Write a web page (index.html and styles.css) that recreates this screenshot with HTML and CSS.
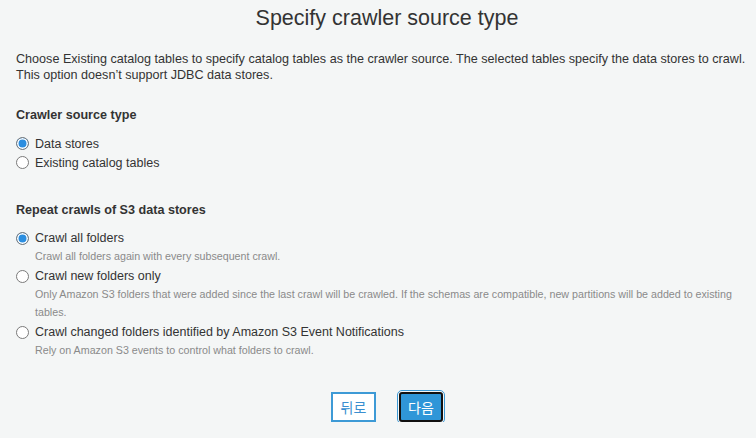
FILE: index.html
```html
<!DOCTYPE html>
<html lang="en">
<head>
  <meta charset="UTF-8" />
  <meta name="viewport" content="width=device-width, initial-scale=1.0"/>
  <title>Specify crawler source type</title>
  <link rel="stylesheet" href="styles.css">
</head>
<body>
  <div class="page">
    <h1 class="title">Specify crawler source type</h1>
    <p class="intro">
      Choose Existing catalog tables to specify catalog tables as the crawler source. The selected tables specify the data stores to crawl.<br>
      This option doesn’t support JDBC data stores.
    </p>

    <div class="section source-type">
      <h3>Crawler source type</h3>
      <label class="option">
        <input type="radio" name="source" checked />
        <span>Data stores</span>
      </label>
      <label class="option">
        <input type="radio" name="source" />
        <span>Existing catalog tables</span>
      </label>
    </div>

    <div class="section repeat">
      <h3>Repeat crawls of S3 data stores</h3>
      <label class="option">
        <input type="radio" name="repeat" checked />
        <span>Crawl all folders</span>
      </label>
      <div class="desc">Crawl all folders again with every subsequent crawl.</div>
      <label class="option">
        <input type="radio" name="repeat" />
        <span>Crawl new folders only</span>
      </label>
      <div class="desc">Only Amazon S3 folders that were added since the last crawl will be crawled. If the schemas are compatible, new partitions will be added to existing tables.</div>
      <label class="option">
        <input type="radio" name="repeat" />
        <span>Crawl changed folders identified by Amazon S3 Event Notifications</span>
      </label>
      <div class="desc">Rely on Amazon S3 events to control what folders to crawl.</div>
    </div>

    <div class="actions">
      <button type="button" class="btn btn-back">뒤로</button>
      <button type="button" class="btn btn-next">다음</button>
    </div>
  </div>
</body>
</html>
```

FILE: styles.css
```css
body {
  font-family: "Liberation Sans", Arial, "Noto Sans CJK KR", sans-serif;
  background: #f4f6f6;
  color: #333;
  margin: 0;
}
.page {
  padding: 5px 10px 0 16px;
}
.title {
  font-size: 21.5px;
  font-weight: normal;
  line-height: 26px;
  text-align: center;
  margin: 0 0 20px 0;
  padding-left: 12px;
}
.intro {
  font-size: 12.6px;
  line-height: 16px;
  margin: 0;
}
.section h3 {
  font-size: 12.6px;
  line-height: 16px;
  font-weight: bold;
  margin: 0;
}
.source-type {
  margin-top: 24px;
}
.source-type h3 {
  margin-bottom: 11px;
}
.repeat {
  margin-top: 30px;
}
.repeat h3 {
  margin-bottom: 11px;
}
.option {
  display: flex;
  align-items: center;
  gap: 6px;
  font-size: 12.5px;
  line-height: 18px;
  height: 19px;
}
.repeat .option {
  height: 18px;
}
.option input {
  appearance: none;
  -webkit-appearance: none;
  width: 13px;
  height: 13px;
  margin: 0;
  border: 1px solid #7a7a7a;
  border-radius: 50%;
  background: #fff;
  flex: none;
}
.option input:checked {
  background: #2b8ee0;
  box-shadow: inset 0 0 0 1.5px #fff;
}
.desc {
  font-size: 10.7px;
  line-height: 18px;
  color: #8a8a8a;
  padding-left: 19px;
  margin: 0 0 2px 0;
}
.actions {
  display: flex;
  justify-content: center;
  gap: 23px;
  margin-top: 33px;
  padding-left: 12px;
}
.btn {
  font-family: "Noto Sans CJK KR", sans-serif;
  font-size: 14px;
  height: 30px;
  padding: 0 6px;
  border-radius: 0;
  cursor: pointer;
}
.btn-back {
  background: #fff;
  color: #3a8fd0;
  border: 2px solid #3d9ad6;
  width: 45px;
}
.btn-next {
  background: #2f96d8;
  color: #fff;
  border: 2px solid #111;
  border-radius: 3px;
  width: 44px;
  outline: 1px solid #3d9ad6;
  outline-offset: 1px;
}
```
